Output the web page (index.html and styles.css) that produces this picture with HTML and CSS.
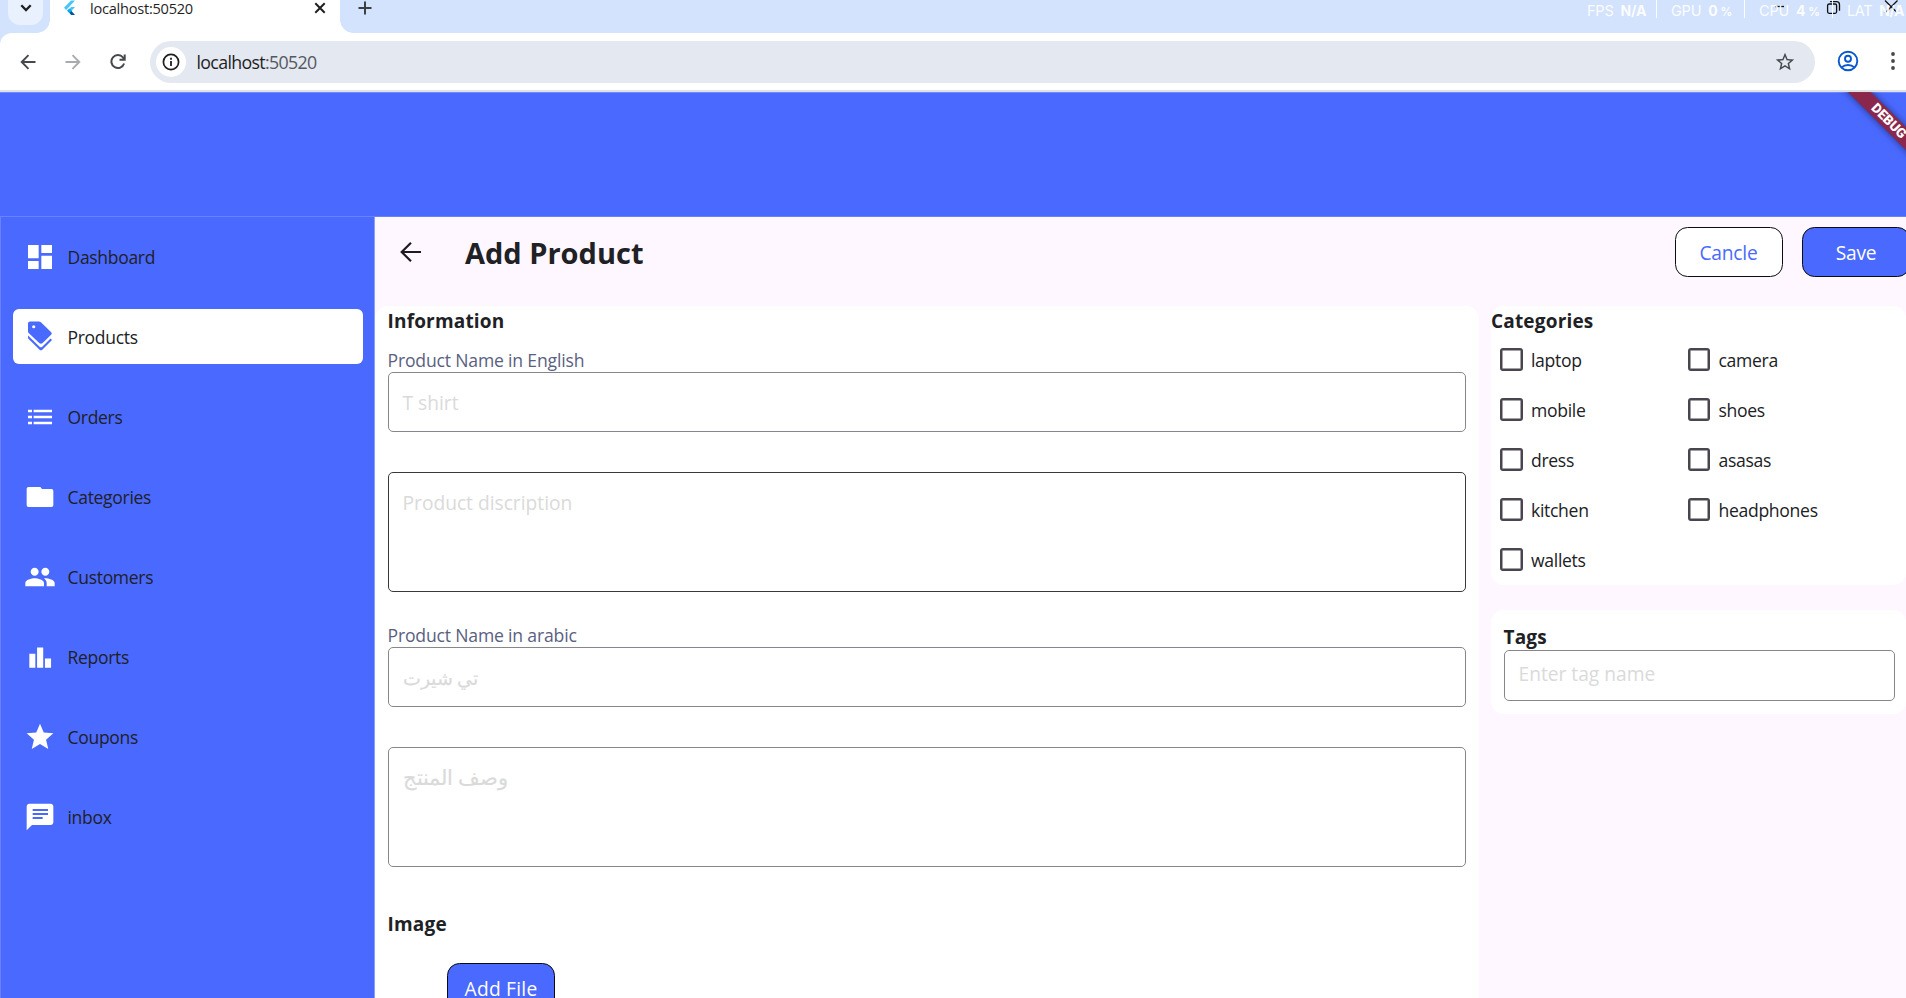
FILE: index.html
```html
<!DOCTYPE html>
<html lang="en">
<head>
<meta charset="utf-8">
<title>localhost:50520</title>
<link rel="stylesheet" href="styles.css">
</head>
<body>
<div class="window">
  <div class="tabstrip">
    <div class="tab-search"><svg width="12" height="8" viewBox="0 0 12 8"><path d="M1.3 1.3 6 6l4.700-4.700" fill="none" stroke="#1f1f1f" stroke-width="2.300"/></svg></div>
    <div class="tab">
      <svg class="logo" width="12" height="17" viewBox="0 0 12 17"><path d="M11 .5H7L0 7.700 2.200 10z" fill="#47c5fb"/><path d="M11 7H7.200L3.400 10.800 5.500 13z" fill="#47c5fb"/><path d="M3.400 10.800 5.500 8.700 11 15H7.200z" fill="#00569e"/><path d="M5.500 8.700 7.700 10.800 5.500 13 3.400 10.800z" fill="#00b5f8"/></svg>
      <span class="tab-title">localhost:50520</span>
      <svg width="12" height="12" viewBox="0 0 12 12"><path d="M1.300 1.300l9.400 9.400M10.700 1.300l-9.400 9.400" stroke="#1f1f1f" stroke-width="2"/></svg>
    </div>
    <svg class="plus" width="14" height="14" viewBox="0 0 14 14"><path d="M7 .5v13M.5 7h13" stroke="#3c3f43" stroke-width="2"/></svg>
    <svg class="win-controls" width="130" height="16" viewBox="0 0 130 16"><g fill="none" stroke="#111" stroke-width="1.300"><path d="M5 6.500h9"/><rect x="57.600" y="4" width="9" height="9.300" rx="1.500"/><path d="M60 1.700h6.500q3 0 3 3v6"/><path d="M115 .5l12.500 12.500M127.500.5 115 13"/></g></svg>
    <div class="stats">
      <span class="stat">FPS <b>N/A</b></span><span class="stat">GPU <b>0<small>%</small></b></span><span class="stat">CPU <b>4<small>%</small></b></span><span class="stat last">LAT <b>N/A</b></span>
    </div>
  </div>
  <div class="toolbar">
    <svg class="nav" width="16" height="16" viewBox="0 0 16 16"><path d="M15.500 8H2M8.500 1.200 1.700 8l6.800 6.800" fill="none" stroke="#45484c" stroke-width="1.900"/></svg>
    <svg class="nav" width="16" height="16" viewBox="0 0 16 16"><path d="M.5 8H14M7.500 1.200 14.300 8l-6.800 6.800" fill="none" stroke="#a9abae" stroke-width="1.900"/></svg>
    <svg class="nav reload" width="16" height="16" viewBox="0 0 16 16"><path d="M14.100 9.500A6.500 6.500 0 1 1 13 3.500L14.500 5.300M14.700.5V5.700H9.500" fill="none" stroke="#45484c" stroke-width="2"/></svg>
    <div class="omnibox">
      <div class="info"><svg width="18" height="18" viewBox="0 0 18 18"><circle cx="9" cy="9" r="7.600" fill="none" stroke="#1f1f1f" stroke-width="1.700"/><path d="M9 8v5M9 4.700v2" stroke="#1f1f1f" stroke-width="1.800"/></svg></div>
      <span class="url">localhost<i>:50520</i></span>
      <svg width="22" height="22" viewBox="0 0 24 24"><path fill="#45484c" d="M22 9.240l-7.190-.62L12 2 9.190 8.630 2 9.240l5.460 4.730L5.820 21 12 17.270 18.180 21l-1.630-7.030L22 9.240zM12 15.400l-3.760 2.270 1-4.280-3.320-2.880 4.380-.38L12 6.100l1.710 4.040 4.380.38-3.320 2.880 1 4.280L12 15.400z"/></svg>
    </div>
    <svg class="profile" width="22" height="22" viewBox="0 0 22 22"><g fill="none" stroke="#0b57d0" stroke-width="1.900"><circle cx="11" cy="11" r="9.300"/><circle cx="11" cy="8.800" r="3"/><path d="M4.500 17.500Q7.200 15 11 15t6.500 2.500"/></g></svg>
    <svg class="dots" width="6" height="20" viewBox="0 0 6 20"><g fill="#45484c"><circle cx="3" cy="3" r="1.900"/><circle cx="3" cy="10" r="1.900"/><circle cx="3" cy="17" r="1.900"/></g></svg>
  </div>

  <div class="app">
    <div class="topbar"></div>
    <div class="debug">DEBUG</div>
    <div class="body">
      <nav class="sidebar">
        <a class="item"><svg viewBox="0 0 24 24"><path d="M3 13h8V3H3v10zm0 8h8v-6H3v6zm10 0h8V11h-8v10zm0-18v6h8V3h-8z"/></svg><span>Dashboard</span></a>
        <a class="item active"><svg viewBox="0 0 24 24"><path fill-rule="evenodd" d="M3 1.800Q3 .3 4.500.3H11.200Q12 .3 12.700.9L20.400 8.400Q21.200 9.300 20.500 10.200L14 16.500Q12.700 17.600 11.400 16.500L3.500 9Q3 8.500 3 7.700zM7.300 5.500A1.200 1.200 0 1 0 7.300 3.100 1.200 1.200 0 0 0 7.300 5.500z"/><path d="M3 10.800 11.700 19.300Q12.700 20.200 13.700 19.300L19.900 13.200 21 14.200 13.700 21.500Q12.700 22.400 11.700 21.500L3.300 13.300Q3 13 3 12.500z"/></svg><span>Products</span></a>
        <a class="item"><svg viewBox="0 0 24 24"><path d="M3 13h3v-2H3v2zm0 4.500h3v-2H3v2zM3 8.500h3v-2H3v2zM7.200 13H21v-2H7.200v2zm0 4.500H21v-2H7.200v2zM7.200 6.500v2H21v-2z"/></svg><span>Orders</span></a>
        <a class="item"><svg viewBox="0 0 24 24"><path d="M13.500 6L12.300 4.500H3.500C2.600 4.500 2 5.100 2 6v12c0 .9.600 1.500 1.500 1.500h17c.9 0 1.500-.6 1.500-1.500V7.500c0-.9-.6-1.500-1.500-1.500z"/></svg><span>Categories</span></a>
        <a class="item"><svg viewBox="0 0 24 24"><path d="M16 11c1.660 0 2.990-1.340 2.990-3S17.660 5 16 5c-1.660 0-3 1.340-3 3s1.340 3 3 3zm-8 0c1.660 0 2.990-1.340 2.990-3S9.660 5 8 5C6.340 5 5 6.340 5 8s1.340 3 3 3zm0 2c-2.330 0-7 1.170-7 3.500V19h14v-2.500c0-2.330-4.670-3.500-7-3.500zm8 0c-.29 0-.62.020-.97.050 1.160.84 1.970 1.970 1.970 3.450V19h6v-2.500c0-2.330-4.670-3.500-7-3.500z"/></svg><span>Customers</span></a>
        <a class="item"><svg viewBox="0 0 24 24"><path d="M4 9.500h4.500V20H4zM15.700 13.200h4.600V20h-4.600zM9.800 4.800h4.600V20H9.800z"/></svg><span>Reports</span></a>
        <a class="item"><svg viewBox="0 0 24 24"><path d="M12 17.270 18.180 21l-1.640-7.030L22 9.240l-7.190-.61L12 2 9.190 8.630 2 9.240l5.460 4.730L5.820 21z"/></svg><span>Coupons</span></a>
        <a class="item"><svg viewBox="0 0 24 24"><path d="M20 2H4c-1.100 0-1.990.9-1.990 2L2 22l4-4h14c1.100 0 2-.9 2-2V4c0-1.100-.9-2-2-2zM6.500 9h11.500v1.500H6.500V9zm7.500 4.500H6.500V12H14v1.500zM18 7.500H6.500V6H18v1.500z"/></svg><span>inbox</span></a>
      </nav>
      <main class="main">
        <header class="head">
          <svg class="back" width="22" height="22" viewBox="0 0 22 22"><path d="M21 11H2M11 1.700 1.700 11 11 20.300" fill="none" stroke="#1d1b20" stroke-width="2.200"/></svg>
          <h1>Add Product</h1>
          <button class="btn ghost">Cancle</button>
          <button class="btn">Save</button>
        </header>
        <div class="columns">
          <section class="card form">
            <h2>Information</h2>
            <label>Product Name in English</label>
            <div class="field">T shirt</div>
            <div class="field tall focus">Product discription</div>
            <label class="second">Product Name in arabic</label>
            <div class="field arabic">تي شيرت</div>
            <div class="field tall arabic">وصف المنتج</div>
            <h2 class="image-title">Image</h2>
            <button class="btn file">Add File</button>
          </section>
          <aside class="side">
            <section class="card cats">
              <h2>Categories</h2>
              <div class="grid">
                <span class="check">laptop</span><span class="check">camera</span>
                <span class="check">mobile</span><span class="check">shoes</span>
                <span class="check">dress</span><span class="check">asasas</span>
                <span class="check">kitchen</span><span class="check">headphones</span>
                <span class="check">wallets</span>
              </div>
            </section>
            <section class="card tags">
              <h2>Tags</h2>
              <div class="field short">Enter tag name</div>
            </section>
          </aside>
        </div>
      </main>
    </div>
  </div>
</div>
</body>
</html>
```
FILE: styles.css
```css
*, *::before, *::after { box-sizing: border-box; }
body { margin: 0; overflow: hidden; font-family: "Open Sans", "Noto Sans", sans-serif; color: #202124; }
svg { display: block; flex: none; }
h1, h2 { margin: 0; }
.window { width: 1906px; height: 998px; overflow: hidden; display: flex; flex-direction: column; background: #d3e3fd; }

.tabstrip { position: relative; height: 33px; flex: none; display: flex; }
.tab-search { width: 35px; height: 25px; margin-left: 8px; background: #e9f1fe; border-radius: 0 0 12px 12px; display: flex; justify-content: center; padding-top: 4px; }
.tab { position: relative; width: 290px; margin-left: 7px; background: #fff; display: flex; height: 33px; padding: 2px 14px 0 14px; }
.tab::before, .tab::after { content: ""; position: absolute; bottom: 0; width: 13px; height: 13px; }
.tab::before { left: -13px; background: radial-gradient(circle at 0 0, transparent 12.500px, #fff 13px); }
.tab::after { right: -13px; background: radial-gradient(circle at 100% 0, transparent 12.500px, #fff 13px); }
.logo { margin-top: -2px; }
.tab-title { margin: -1px auto 0 14px; font-size: 14.600px; line-height: 15px; letter-spacing: -.25px; color: #1f1f1f; }
.plus { margin: 1px 0 0 18px; }
.win-controls { position: absolute; left: 1770px; top: 0; }
.stats { position: absolute; left: 1587px; top: 1px; display: flex; color: #fff; font: 14.500px/20px Inter, sans-serif; white-space: nowrap; }
.stat { width: 88px; position: relative; display: flex; gap: 7px; opacity: .92; letter-spacing: -.2px; }
.stat + .stat::before { content: ""; position: absolute; left: -15px; top: -1px; width: 1px; height: 18px; background: #fff; }
.stat:first-child { width: 84px; }
.stat.last { width: auto; letter-spacing: -.4px; }
.stat b { font-weight: 700; font-size: 14px; }
.stat small { font-size: 11.500px; margin-left: 3px; }

.toolbar { height: 59px; flex: none; background: #fff; border-radius: 12px 0 0 0; border-bottom: 2px solid #dfe2e4; display: flex; padding-top: 8px; }
.nav { margin: 13px 0 0 20px; }
.nav + .nav { margin-left: 29px; }
.omnibox { width: 1665px; height: 42px; margin-left: 24px; border-radius: 21px; background: #e3e8f1; display: flex; align-items: center; padding: 0 19px 0 6px; }
.info { width: 30px; height: 30px; border-radius: 50%; background: #fff; display: grid; place-items: center; }
.url { margin: 0 auto 0 10.500px; font-size: 17.800px; letter-spacing: -.66px; color: #1f1f1f; }
.url i { font-style: normal; color: #55585e; }
.profile { margin: 9px 0 0 21.500px; }
.dots { margin: 10px 0 0 31px; }

.app { position: relative; flex: 1; overflow: hidden; background: #4a69ff; }
.topbar { height: 125px; border-top: 1px solid #7187ff; border-bottom: 1px solid #6a82ff; }
.debug { position: absolute; left: 1823px; top: 22.500px; width: 135px; height: 15.500px; padding-right: 5px; transform: rotate(45deg); background: rgba(151, 28, 46, .85); box-shadow: 0 0 7px rgba(0, 0, 0, .55); color: #fff; font: 900 13.500px/15.500px Roboto, "Open Sans", sans-serif; text-align: center; }
.body { display: flex; height: 781px; }
.sidebar { width: 375px; flex: none; border-left: 1px solid #6a82ff; border-right: 1px solid #8b9dff; padding: 12px 11.500px 0 11.500px; display: flex; flex-direction: column; gap: 25px; }
.item { height: 55px; flex: none; display: flex; align-items: center; padding-left: 11.500px; border-radius: 6px; font-size: 17.500px; letter-spacing: -.3px; color: #202124; }
.item svg { width: 32px; height: 32px; fill: #fff; }
.item span { margin-left: 11.500px; }
.item.active { background: #fff; }
.item.active svg { fill: #4a69ff; }

.main { flex: 1; background: #fef7ff; min-width: 0; }
.head { height: 89px; display: flex; padding: 10px 0 0 24.500px; }
.back { margin-top: 14px; }
h1 { margin: 6px auto 0 43.500px; font-size: 29px; line-height: 40px; font-weight: 700; letter-spacing: 0; }
.btn { width: 108px; height: 50px; flex: none; margin-right: 19.500px; padding: 2px 0 0; border: 1.500px solid #0b0b14; border-radius: 12.500px; background: #4a69ff; color: #fff; font: 19.200px/26px "Open Sans", sans-serif; letter-spacing: -.2px; }
.btn.ghost { background: #fff; color: #4a69ff; }
.btn:last-child { margin-right: -4px; }
.columns { display: flex; gap: 12px; align-items: flex-start; }
.card { background: #fff; border-radius: 12.500px; }
h2 { font-size: 19px; line-height: 26px; font-weight: 700; letter-spacing: .18px; }
.form { width: 1104px; height: 740px; padding: 2px 13.500px 0 12.500px; display: flex; flex-direction: column; }
label { margin-top: 14px; font-size: 17.600px; line-height: 24px; letter-spacing: -.18px; color: #5a607f; }
.field { height: 60px; flex: none; border: 1px solid #88858d; border-radius: 5px; padding: 16px 14px; font-size: 19.200px; line-height: 28px; color: #dadada; }
.form .field { margin-bottom: 40px; }
.field.tall { height: 120px; }
.form .field.focus { border-color: #3a383d; margin-bottom: 31px; }
label.second { margin-top: 0; }
.arabic { font-size: 19.200px; -webkit-text-stroke: .2px #dadada; }
.arabic.tall { font-size: 21px; padding-top: 15px; }
.image-title { margin-top: 4px; }
.btn.file { margin: 26px 0 0 59.500px; letter-spacing: .25px; }
.form .btn.file { margin-right: auto; }
.side { width: 415px; display: flex; flex-direction: column; gap: 25px; }
.cats { height: 279px; padding-top: 2px; }
.grid { display: grid; grid-template-columns: 187.500px 1fr; grid-auto-rows: 50px; padding-left: 9px; }
.check { display: flex; height: 50px; align-items: center; gap: 8.500px; font-size: 17.600px; letter-spacing: -.32px; padding-top: 1px; }
.check::before { content: ""; width: 22.500px; height: 22.500px; border: 2px solid #49454f; box-shadow: inset 0 0 0 .5px #49454f; border-radius: 3px; }
.tags { height: 104px; padding: 14px 11.500px 0 12.500px; }
.field.short { height: 51px; padding-top: 9px; }
```
